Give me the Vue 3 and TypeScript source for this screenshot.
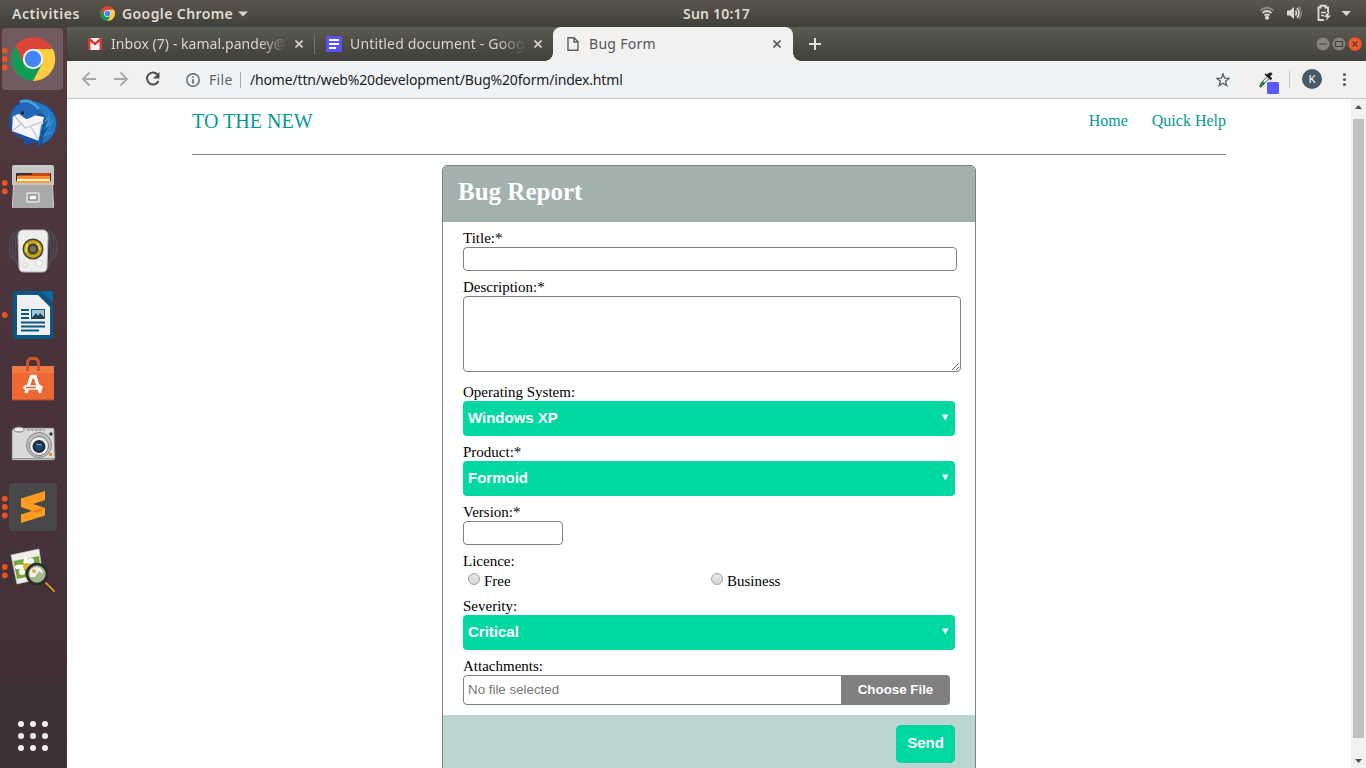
<script setup lang="ts">
import { ref } from 'vue'

interface DockItem { name: string; dots: number; active?: boolean }

const dock: DockItem[] = [
  { name: 'chrome', dots: 3, active: true },
  { name: 'mail', dots: 0 },
  { name: 'files', dots: 2 },
  { name: 'music', dots: 0 },
  { name: 'writer', dots: 1 },
  { name: 'software', dots: 0 },
  { name: 'camera', dots: 0 },
  { name: 'sublime', dots: 3 },
  { name: 'viewer', dots: 2 },
]

const title = ref('')
const description = ref('')
const version = ref('')
</script>

<template>
  <div class="desktop">
    <header class="topbar">
      <span class="t activities">Activities</span>
      <svg class="chrome-mini" viewBox="0 0 44 44">
        <circle cx="22" cy="22" r="22" fill="#db4437" />
        <path d="M3 11A22 22 0 0 0 22 44L31.500 27.500 12.500 27.500Z" fill="#0f9d58" />
        <path d="M22 44A22 22 0 0 0 41 11H22L31.500 27.500Z" fill="#ffcd40" />
        <circle cx="22" cy="22" r="10" fill="#f1f1f1" /><circle cx="22" cy="22" r="8" fill="#4285f4" />
      </svg>
      <span class="t appname">Google Chrome</span>
      <svg class="caret" viewBox="0 0 10 6"><path d="M0 .5H10L5 5.500Z" fill="#d5d3cd" /></svg>
      <span class="t clock">Sun 10:17</span>
      <svg class="tray" viewBox="0 0 100 27">
        <g fill="none" stroke="#dad8d3" stroke-width="1.700">
          <path d="M0.500 10.500Q7 5 13.500 10.500" opacity=".45" /><path d="M2.500 13Q7 9 11.500 13" /><path d="M4.500 15.500Q7 13.500 9.500 15.500" />
        </g>
        <circle cx="7" cy="17.700" r="2" fill="#dad8d3" />
        <path d="M27 10.500H30L34 7V19L30 15.500H27Z" fill="#dad8d3" />
        <g fill="none" stroke="#dad8d3" stroke-width="1.600"><path d="M35.500 10.500Q37.500 13 35.500 15.500" /><path d="M37 8Q41 13 37 18" /><path d="M39 6.500Q43.500 13 39 19.500" opacity=".4" /></g>
        <path d="M64 20H58.500V7.500H60.500V5.800H65.500V7.500H68V12" fill="none" stroke="#dad8d3" stroke-width="1.900" />
        <path d="M61 12.500H66M61 15.500H64" stroke="#dad8d3" stroke-width="1.600" />
        <path d="M68 12L64 17H67L65.500 21L71 15.500H68L69.500 12Z" fill="#dad8d3" />
        <path d="M81.500 11H91L86.300 16Z" fill="#dad8d3" />
      </svg>
    </header>

    <div class="workspace">
      <aside class="dock">
        <div v-for="item in dock" :key="item.name" class="dock-item" :class="{ active: item.active }">
          <svg viewBox="0 0 67 64" width="67" height="64">
            <g fill="#e95420">
              <template v-if="item.dots === 3"><circle cx="4.800" cy="23.700" r="2.900" /><circle cx="4.800" cy="32" r="2.900" /><circle cx="4.800" cy="40.500" r="2.900" /></template>
              <template v-else-if="item.dots === 2"><circle cx="4.800" cy="28" r="2.900" /><circle cx="4.800" cy="36.300" r="2.900" /></template>
              <circle v-else-if="item.dots === 1" cx="4.800" cy="32" r="2.900" />
            </g>
            <g v-if="item.name === 'chrome'" transform="translate(11 10)">
              <circle cx="22" cy="22" r="22" fill="#db4437" />
              <path d="M4.500 9A22 22 0 0 0 22 44L31 27 13 27Z" fill="#0f9d58" />
              <path d="M22 44A22 22 0 0 0 41.800 12H22L31 27Z" fill="#ffcd40" />
              <circle cx="22" cy="22" r="10.200" fill="#f1f1f1" /><circle cx="22" cy="22" r="8.200" fill="#4285f4" />
            </g>
            <g v-else-if="item.name === 'mail'">
              <path d="M20 12C24 7 29 8 32 10C44 10 58 19 57 33C57 43 49 53 35 56L39 51L23 54L25 49C14 45 8 39 9 29C9 22 13 17 17 13Z" fill="#1d4f9e" />
              <path d="M19 12C26 6 32 10 38 12C49 15 56 23 56 33C56 42 50 49 42 53L49 35L43 22Z" fill="#2678be" />
              <path d="M13 23L24 22L44 26L42 36L39 50L12 40Z" fill="#f5f5f7" />
              <path d="M14 24L25 37L42 31M12 40L21 33M39 49L31 36" fill="none" stroke="#c0c1ca" stroke-width="1.200" />
              <path d="M18 14C25 7 38 11 43 23C36 21 34 27 26 28L19 23C15 24 13 25 11 28C11 21 14 17 18 14Z" fill="#2465b7" />
              <path d="M20 11C27 8 34 12 39 18" fill="none" stroke="#42a4de" stroke-width="2.500" />
              <path d="M41 34C46 30 49 25 49 19L50 32L55 26L46 43L52 40L38 53Z" fill="#2e94cf" />
              <path d="M43 33L48 29L44 39L50 34L42 47L48 44L38 53Z" fill="#1551a0" />
              <circle cx="22.500" cy="22" r="1.700" fill="#182441" /><path d="M19 23L18 27L22 25Z" fill="#e5e1d7" />
            </g>
            <g v-else-if="item.name === 'files'">
              <path d="M12 12Q12 10 14 10H52Q54 10 54 12V30H12Z" fill="#c6c6c6" /><path d="M16 18H51V31H16Z" fill="#343331" />
              <path d="M18 20H31L33 18H50V28H18Z" fill="#c64a17" /><path d="M17 21H50V29H17Z" fill="#f28d38" /><path d="M17 24H50V31H17Z" fill="#fff0c2" /><path d="M16 26H51V31H16Z" fill="#f4a044" />
              <path d="M14 28H52L54 53H12Z" fill="#aaa9a7" /><path d="M14 29H52" stroke="#ddd" /><path d="M13 30H14L13 52H12ZM52 30H53L54 52H53Z" fill="#cececd" />
              <rect x="26" y="37" width="14" height="11" rx="2" fill="#d3d3d1" /><rect x="29" y="40" width="8" height="5" fill="#f7f7f7" stroke="#666" />
            </g>
            <g v-else-if="item.name === 'music'">
              <g fill="none" stroke="#596e98" opacity=".4" stroke-width="1.200"><path d="M15 12Q9 26 15 43M12 15Q6 28 12 40M18 10Q12 29 18 48M51 12Q57 26 51 43M54 15Q60 28 54 40M48 10Q54 29 48 48" /></g>
              <path d="M23 11H43Q48 11 48 18L47 48Q47 53 42 53H24Q19 53 19 48L18 18Q18 11 23 11Z" fill="#eeeeec" stroke="#bbb" />
              <circle cx="33" cy="30" r="10.500" fill="#41422f" /><circle cx="33" cy="30" r="9" fill="#c7a415" /><path d="M26 24L32 29L25 34ZM38 23L34 30L41 31Z" fill="#edda50" /><circle cx="33" cy="30" r="5.500" fill="#424635" /><circle cx="33" cy="30" r="3" fill="#77736c" />
              <circle cx="39" cy="44" r="3.500" fill="#fff" stroke="#d0d0ce" /><circle cx="25" cy="46" r="2.500" fill="none" stroke="#d8d8d5" />
            </g>
            <g v-else-if="item.name === 'writer'">
              <path d="M15 8H39L53 22V54Q53 56 51 56H15Q13 56 13 54V10Q13 8 15 8Z" fill="#075887" /><path d="M17 12H38L50 24V52H17Z" fill="#f0f0f0" />
              <path d="M40 8H51Q53 8 53 10V20Z" fill="#0769a3" />
              <path d="M21 27H29M21 31H29M21 35H29M21 39.500H45M21 43.500H45M21 47.500H39" stroke="#075887" stroke-width="1.900" />
              <rect x="31" y="26" width="14" height="10" fill="#075887" /><rect x="32" y="27" width="12" height="7" fill="#91c9e9" /><path d="M32 35L36 30L38 33L40 30L44 34V36H32Z" fill="#263f4b" /><circle cx="42.500" cy="28.500" r="1.500" fill="#f4b63d" />
            </g>
            <g v-else-if="item.name === 'software'">
              <path d="M12 19H54V53H12Z" fill="#ed6832" /><path d="M12 19H54V26H12Z" fill="#f07a43" /><path d="M12 53H54" stroke="#ac4b2b" />
              <path d="M27.500 24V14.500L30 11.500H36L38.500 14.500V24" fill="none" stroke="#cf542b" stroke-width="2.800" />
              <path d="M26 46L31.500 29.500H35L40.500 46" fill="none" stroke="#fff" stroke-width="3.300" /><path d="M25.500 40.500H40.500" stroke="#fff" stroke-width="4.500" stroke-linecap="round" /><path d="M26 40.500H36" stroke="#df602f" stroke-width="1.500" />
            </g>
            <g v-else-if="item.name === 'camera'">
              <path d="M12 20Q12 17 16 17H54L55 47Q55 49 52 49H12Z" fill="#dadada" stroke="#777" stroke-width=".7" />
              <ellipse cx="19" cy="18.500" rx="5" ry="2.500" fill="#eee" stroke="#777" /><path d="M27 19H45" stroke="#777" stroke-dasharray="3 1" /><circle cx="51" cy="23" r="1.700" fill="#333" />
              <circle cx="39" cy="34" r="12.500" fill="#bfc0c2" stroke="#888" /><circle cx="39" cy="35" r="9.500" fill="#eee" stroke="#777" /><circle cx="39" cy="35.500" r="6.500" fill="#242c37" /><rect x="35.500" y="33" width="7" height="6" rx="2" fill="#164a85" /><path d="M36 33L42 34" stroke="#72add8" />
              <rect x="49" y="42" width="3" height="3" fill="#e49829" /><path d="M12 47.500H54" stroke="#999" />
            </g>
            <g v-else-if="item.name === 'sublime'">
              <rect x="9" y="8" width="48" height="48" rx="3" fill="#484848" />
              <path d="M21 23.500L45 16V25L33 29L45 33V40.500L21 48V39.500L32 36L21 32Z" fill="#ff9b20" /><path d="M32 36L45 33L38 38Z" fill="#e37d10" />
            </g>
            <g v-else>
              <path d="M11 16L39 10L43 39L17 45Z" fill="#efefe9" stroke="#d4d4cc" stroke-width=".6" /><path d="M13.500 22L39 17L41 35L17 40Z" fill="#77a63b" />
              <g fill="#fff"><ellipse cx="26" cy="23" rx="2.500" ry="5" /><ellipse cx="20" cy="28" rx="5" ry="2.500" /><ellipse cx="32" cy="28" rx="5" ry="2.500" /><circle cx="22" cy="33" r="3" /><circle cx="31" cy="22" r="3" /></g><circle cx="26" cy="27" r="3" fill="#e7ae25" />
              <path d="M44 43L53 52" stroke="#36312d" stroke-width="4.500" stroke-linecap="round" /><path d="M46 44L54 52" stroke="#d68e26" stroke-width="2" stroke-linecap="round" />
              <circle cx="37" cy="35" r="10" fill="#a5b78b" stroke="#292d2b" stroke-width="2.700" /><path d="M30 38Q28 28 37 28Q43 29 43 35L39 32L35 38Z" fill="#f0f0e8" /><circle cx="34" cy="32" r="2" fill="#d4b24b" />
            </g>
          </svg>
        </div>
        <svg class="apps" viewBox="0 0 67 40" width="67" height="40"><g fill="#f1efed"><template v-for="y in 3" :key="y"><circle v-for="x in 3" :key="x" :cx="9 + x * 12" :cy="y * 12 - 4" r="3" /></template></g></svg>
      </aside>

      <main class="browser">
        <div class="tabs">
          <div class="tab first">
            <svg width="14" height="12" viewBox="0 0 14 12"><path d="M0 0H14V12H0Z" fill="#f2f2f2" /><path d="M1.200 12V1L7 6L12.800 1V12" fill="none" stroke="#d83331" stroke-width="2.400" /><path d="M3 0H11L7 3.800Z" fill="#eee" /></svg>
            <span class="t tab-text inbox">Inbox (7) - kamal.pandey@</span>
            <svg class="x" viewBox="0 0 8 8"><path d="M.5.500L7.500 7.500M7.500.500L.5 7.500" /></svg>
          </div>
          <div class="tab second">
            <svg width="16" height="16" viewBox="0 0 16 16"><rect width="16" height="16" rx="1" fill="#5951fb" /><path d="M3 4H13M3 8H13M3 12H10" stroke="#fff" stroke-width="2" /></svg>
            <span class="t tab-text doc">Untitled document - Goog</span>
            <svg class="x" viewBox="0 0 8 8"><path d="M.5.500L7.500 7.500M7.500.500L.5 7.500" /></svg>
          </div>
          <div class="tab current">
            <svg width="12" height="14" viewBox="0 0 12 14"><path d="M1 .75H7L11 4.750V13.250H1ZM7 1V5H11" fill="none" stroke="#5f6062" stroke-width="1.400" /></svg>
            <span class="t tab-text bug">Bug Form</span>
            <svg class="x" viewBox="0 0 8 8"><path d="M.5.500L7.500 7.500M7.500.500L.5 7.500" /></svg>
          </div>
          <svg class="plus" viewBox="0 0 12 12"><path d="M6 0V12M0 6H12" stroke="#e1e0da" stroke-width="2" /></svg>
          <svg class="window-buttons" viewBox="0 0 48 16"><circle cx="8" cy="8" r="6.500" fill="#84827b" /><circle cx="24" cy="8" r="6.500" fill="#84827b" /><circle cx="40" cy="8" r="6.700" fill="#f15b2c" stroke="#c43e19" stroke-width=".5" /><path d="M4.500 8H11.500M20.500 5.500H27.500V10.500H20.500ZM37.500 5.500L42.500 10.500M42.500 5.500L37.500 10.500" fill="none" stroke="#44403a" stroke-width="1.200" /></svg>
        </div>

        <div class="toolbar">
          <svg class="nav" viewBox="0 0 100 37" width="100" height="37"><g fill="none" stroke="#a9a9a8" stroke-width="1.800"><path d="M29 18H16M22.500 11.500L16 18L22.500 24.500M47 18H60M53.500 11.500L60 18L53.500 24.500" /></g><path d="M90.500 13.500A6 6 0 1 0 91.500 20" fill="none" stroke="#4d4f51" stroke-width="2" /><path d="M92.500 11V17.500H86Z" fill="#4d4f51" /></svg>
          <div class="address">
            <svg width="14" height="14" viewBox="0 0 14 14"><circle cx="7" cy="7" r="6.200" fill="none" stroke="#5f6368" stroke-width="1.400" /><path d="M7 3.200V4.800M7 6.200V10.800" stroke="#5f6368" stroke-width="1.600" /></svg>
            <span class="t file">File</span><span class="divider"></span><span class="t url">/home/ttn/web%20development/Bug%20form/index.html</span>
            <svg class="star" width="14" height="14" viewBox="0 0 14 14"><path d="M7 1L8.600 5.100L13 5.400L9.600 8.200L10.800 12.600L7 10.200L3.200 12.600L4.400 8.200L1 5.400L5.400 5.100Z" fill="none" stroke="#5b5f63" stroke-width="1.350" /></svg>
          </div>
          <svg class="tools" width="120" height="37" viewBox="0 0 120 37"><path d="M14 26L15 22L21.500 15L23.500 17L17 24Z" fill="#e7eee8" stroke="#465c4c" stroke-width="1" /><path d="M14 26L18 21" stroke="#168147" stroke-width="2.500" /><path d="M18.500 13.500L25 19.500L26 17L24 15.500L26.500 13Q25.500 10.500 22 12.500L21 13.500L19.500 12.500Z" fill="#202124" /><rect x="21" y="21" width="12" height="12" rx="1.500" fill="#5b57fa" /><path d="M43.500 10V27" stroke="#c9cbcc" /><circle cx="66" cy="18" r="10" fill="#455a64" /><text x="66" y="22.200" text-anchor="middle" fill="#fff" font-size="11.500">K</text><g fill="#5f6164"><circle cx="98.500" cy="13.500" r="1.600" /><circle cx="98.500" cy="18.500" r="1.600" /><circle cx="98.500" cy="23.500" r="1.600" /></g></svg>
        </div>

        <div class="viewport">
          <div class="page">
            <nav class="site-nav"><a class="brand">TO THE NEW</a><span class="links"><a>Home</a><a>Quick Help</a></span></nav>
            <form class="card" @submit.prevent>
              <h1>Bug Report</h1>
              <div class="fields">
                <div class="field"><label>Title:*</label><input v-model="title" class="box title-input"></div>
                <div class="field desc"><label>Description:*</label><textarea v-model="description" class="box"></textarea></div>
                <div class="field"><label>Operating System:</label><div class="select">Windows XP<svg viewBox="0 0 6 6"><path d="M0 .5H6L3 6Z" fill="#fff" /></svg></div></div>
                <div class="field"><label>Product:*</label><div class="select">Formoid<svg viewBox="0 0 6 6"><path d="M0 .5H6L3 6Z" fill="#fff" /></svg></div></div>
                <div class="field"><label>Version:*</label><input v-model="version" class="box version-input"></div>
                <div class="field"><label>Licence:</label><div class="radios"><span class="option"><i class="radio"></i>Free</span><span class="option"><i class="radio"></i>Business</span></div></div>
                <div class="field"><label>Severity:</label><div class="select">Critical<svg viewBox="0 0 6 6"><path d="M0 .5H6L3 6Z" fill="#fff" /></svg></div></div>
                <div class="field"><label>Attachments:</label><div class="upload"><span class="filename">No file selected</span><button type="button">Choose File</button></div></div>
              </div>
              <footer><button type="submit">Send</button></footer>
            </form>
          </div>
          <div class="scrollbar"><svg viewBox="0 0 15 20"><path d="M4 10L7.500 6L11 10Z" fill="#505050" /></svg><div class="thumb"></div><svg viewBox="0 0 15 20"><path d="M4 11L7.500 15L11 11Z" fill="#505050" /></svg></div>
        </div>
      </main>
    </div>
  </div>
</template>

<style>
body { margin: 0; overflow: hidden; }
</style>

<style scoped>
* { box-sizing: border-box; }
.desktop { width: 1366px; height: 768px; overflow: hidden; display: flex; flex-direction: column; font-family: "Noto Sans", "Open Sans", sans-serif; background: #fff; }
svg { display: block; flex: none; }
.t { white-space: nowrap; flex: none; display: block; }
.topbar { height: 27px; flex: none; display: flex; align-items: center; background: linear-gradient(#5a564e, #403f39); color: #dfdbd2; font-weight: 600; font-size: 14px; line-height: 26px; }
.activities { margin-left: 12px; width: 68px; letter-spacing: .55px; }
.chrome-mini { width: 15px; height: 15px; margin-left: 20px; }
.appname { margin-left: 7px; width: 111px; letter-spacing: .4px; }
.caret { width: 10px; height: 6px; margin-left: 5px; }
.clock { margin-left: 435px; width: 68px; letter-spacing: .22px; }
.tray { width: 100px; height: 27px; margin-left: auto; margin-right: 6px; }
.workspace { height: 741px; display: flex; }
.dock { width: 67px; flex: none; display: flex; flex-direction: column; background: linear-gradient(#533b3e, #49333a 45%, #45323a 70%, #3e3134); border-right: 1px solid #49383b; }
.dock-item { height: 64px; flex: none; }
.dock-item svg { overflow: visible; }
.dock-item.active { height: 62px; margin: 1px 3px 1px 2px; background: #705c60; border-radius: 4px; }
.dock-item.active svg { margin: -1px 0 0 -2px; }
.apps { margin-top: 113px; }
.browser { width: 1299px; display: flex; flex-direction: column; }
.tabs { height: 34px; flex: none; display: flex; align-items: center; background: linear-gradient(#5b5b50, #403f39); color: #d7d5cd; font-size: 14px; }
.tab { height: 34px; display: flex; align-items: center; }
.tab-text { overflow: hidden; line-height: 22px; }
.first { width: 248px; padding-left: 21px; }
.inbox { width: 177px; margin-left: 9px; letter-spacing: .05px; mask-image: linear-gradient(90deg, #000 84%, transparent); }
.first .x { margin-left: 7px; }
.first::after { content: ""; width: 1px; height: 20px; margin-left: 11px; background: #77766d; }
.second { width: 238px; padding-left: 11px; }
.doc { width: 176px; margin-left: 8px; letter-spacing: .15px; mask-image: linear-gradient(90deg, #000 84%, transparent); }
.second .x { margin-left: 8px; }
.x { width: 8px; height: 8px; fill: none; stroke: currentColor; stroke-width: 1.6; }
.current { position: relative; width: 240px; padding-left: 14px; background: #f2f1ef; color: #56565a; border-radius: 8px 8px 0 0; }
.current::before, .current::after { content: ""; position: absolute; bottom: 0; width: 8px; height: 8px; }
.current::before { left: -8px; background: radial-gradient(circle at 0 0, transparent 7.5px, #f2f1ef 8px); }
.current::after { right: -8px; background: radial-gradient(circle at 100% 0, transparent 7.5px, #f2f1ef 8px); }
.bug { margin-left: 10px; width: 76px; letter-spacing: .3px; }
.current .x { margin-left: 108px; }
.plus { width: 12px; height: 12px; margin-left: 16px; }
.window-buttons { width: 48px; height: 16px; margin-left: auto; margin-right: 3px; }
.toolbar { height: 38px; flex: none; display: flex; align-items: center; background: #f2f1ef; border-bottom: 1px solid #c9c9c9; }
.nav, .tools { align-self: flex-start; }
.address { width: 1064px; height: 32px; margin-left: 9px; border-radius: 16px; background: #eff3f5; display: flex; align-items: center; padding-left: 10px; font-size: 14px; line-height: 22px; }
.file { margin-left: 9px; width: 26px; color: #5f6368; letter-spacing: .35px; }
.divider { height: 16px; width: 1px; margin: 0 9px 0 5px; background: #aaafb3; }
.url { color: #202124; letter-spacing: -.17px; }
.star { margin-left: auto; margin-right: 10px; }
.tools { margin-left: 6px; }
.viewport { height: 669px; display: flex; overflow: hidden; }
.page { width: 1284px; background: #fff; font-family: "Liberation Serif", serif; overflow: hidden; }
.site-nav { width: 1034px; height: 56px; margin-left: 125px; border-bottom: 1px solid #808080; display: flex; justify-content: space-between; color: #009a93; }
.brand { font-size: 20px; line-height: 23px; margin-top: 11px; letter-spacing: .04px; }
.links { display: flex; gap: 24px; font-size: 16px; line-height: 18px; margin-top: 13px; }
.card { width: 534px; margin: 10px 0 0 375px; border: 1px solid #808080; border-radius: 5px; overflow: hidden; font-size: 15px; }
h1 { height: 56px; margin: 0; padding: 11px 15px; font-size: 25px; line-height: 29px; background: #a2b1ad; color: #fff; }
.fields { padding: 8px 0 10px 20px; display: flex; flex-direction: column; gap: 8px; color: #000; }
.field { display: flex; flex-direction: column; }
label { height: 17px; line-height: 17px; }
.box { border: 1px solid #808080; border-radius: 4px; background: #fff; margin: 0; outline: none; }
.title-input { width: 494px; height: 24px; }
.version-input { width: 100px; height: 24px; }
textarea { width: 498px; height: 76px; }
.desc { margin-bottom: 4px; }
.select { width: 492px; height: 35px; padding: 0 6px 2px 5px; border-radius: 4px; background: #00d8a2; color: #fff; font: bold 15px/33px "Liberation Sans", sans-serif; display: flex; justify-content: space-between; align-items: center; }
.select svg { width: 6.6px; height: 6.6px; }
.radios { height: 20px; display: flex; padding-left: 5px; line-height: 22px; }
.option { width: 243px; display: flex; }
.radio { width: 12px; height: 12px; margin: 3px 4px 0 0; border: 1px solid #a0a0a0; border-radius: 50%; background: linear-gradient(#e6e6e6, #d8d8d8); }
.upload { display: flex; height: 30px; }
.filename { width: 379px; border: 1px solid #808080; border-radius: 4px 0 0 4px; padding-left: 4px; color: #777; font: 13.333px/27px "Liberation Sans", sans-serif; }
button { border: 0; margin: 0; padding: 0; color: #fff; font-family: "Liberation Sans", sans-serif; font-weight: bold; }
.upload button { width: 109px; margin-left: -1px; padding-bottom: 2px; border-radius: 0 4px 4px 0; background: #808080; font-size: 13.333px; }
footer { height: 58px; padding: 10px 20px; background: #bbd6d0; display: flex; justify-content: flex-end; }
footer button { width: 59px; height: 38px; padding-bottom: 4px; border-radius: 5px; background: #00d8a2; font-size: 15px; }
.scrollbar { width: 15px; background: #f1f1f1; display: flex; flex-direction: column; }
.scrollbar svg { width: 15px; height: 20px; }
.thumb { width: 11px; height: 619px; margin: 0 2px 10px; background: #c1c1c1; }
</style>
